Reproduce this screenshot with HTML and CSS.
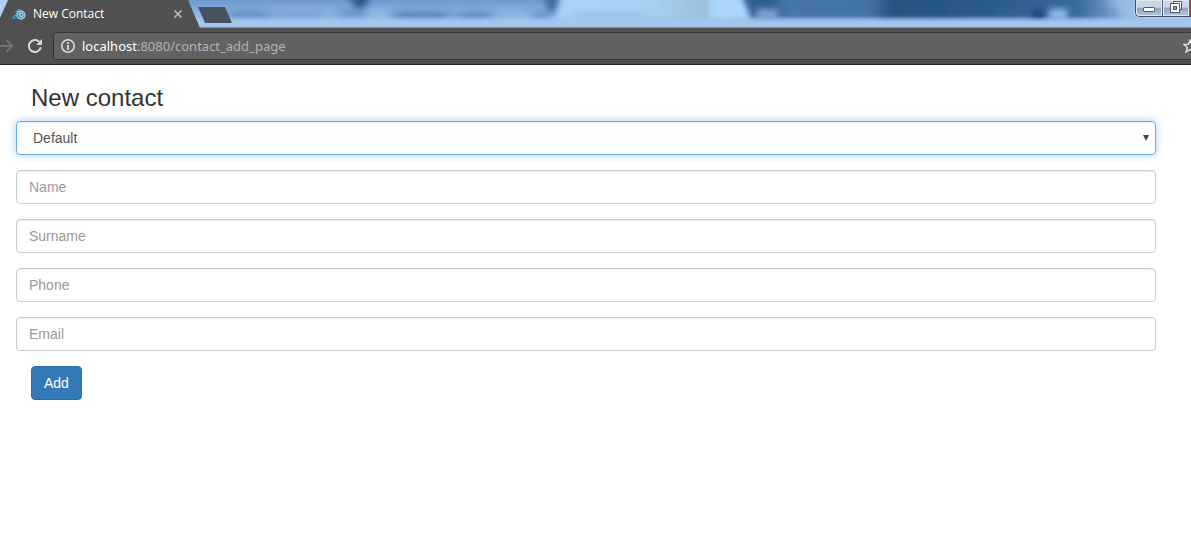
FILE: index.html
```html
<!DOCTYPE html>
<html lang="en">
<head>
<meta charset="utf-8">
<title>New Contact</title>
<link rel="stylesheet" href="styles.css">
</head>
<body>
<header class="browser">
  <div class="tabstrip">
    <svg class="glass" viewBox="0 0 1191 28" preserveAspectRatio="none" aria-hidden="true">
      <defs>
        <linearGradient id="sky" x1="0" y1="0" x2="0" y2="1">
          <stop offset="0" stop-color="#6d98c9"/>
          <stop offset="0.4" stop-color="#86b2e3"/>
          <stop offset="1" stop-color="#a2c5ec"/>
        </linearGradient>
        <linearGradient id="pale" x1="0" y1="0" x2="1" y2="0">
          <stop offset="0" stop-color="#a9d4fa"/>
          <stop offset="0.4" stop-color="#a9d3f6"/>
          <stop offset="0.76" stop-color="#9cbfdc"/>
          <stop offset="0.8" stop-color="#aed9fc"/>
          <stop offset="1" stop-color="#a9d6fb"/>
        </linearGradient>
        <linearGradient id="deep" x1="0" y1="0" x2="1" y2="0">
          <stop offset="0" stop-color="#2c5e8f"/>
          <stop offset="0.08" stop-color="#2f6091"/>
          <stop offset="0.11" stop-color="#4676a9"/>
          <stop offset="0.32" stop-color="#4573a6"/>
          <stop offset="0.38" stop-color="#25527f"/>
          <stop offset="0.62" stop-color="#2b5b8a"/>
          <stop offset="0.85" stop-color="#39699b"/>
          <stop offset="1" stop-color="#91b8e5"/>
        </linearGradient>
        <linearGradient id="edge" x1="0" y1="0" x2="0" y2="1">
          <stop offset="0" stop-color="#a6c7ee" stop-opacity="0"/>
          <stop offset="1" stop-color="#a6c7ee"/>
        </linearGradient>
        <filter id="soft" filterUnits="userSpaceOnUse" x="-20" y="-30" width="1240" height="90"><feGaussianBlur stdDeviation="7 3"/></filter>
        <filter id="slight" filterUnits="userSpaceOnUse" x="-20" y="-30" width="1240" height="90"><feGaussianBlur stdDeviation="3"/></filter>
      </defs>
      <rect width="1191" height="28" fill="url(#sky)"/>
      <rect x="-10" y="-5" width="40" height="34" fill="#b5cdf0" filter="url(#slight)"/>
      <g filter="url(#soft)">
        <rect x="226" y="10" width="42" height="9" fill="#6590c2"/>
        <rect x="272" y="11" width="52" height="7" fill="#789fd0"/>
        <rect x="340" y="8" width="26" height="10" fill="#6993c5"/>
        <rect x="393" y="11" width="56" height="8" fill="#5682b7"/>
        <rect x="458" y="11" width="34" height="8" fill="#6088ba"/>
        <rect x="534" y="10" width="14" height="9" fill="#5c89be"/>
        <rect x="372" y="10" width="10" height="9" fill="#8dc7e0"/>
      </g>
      <path d="M346-8h26l-8 16h-8z" fill="#29588b" filter="url(#slight)"/>
      <path d="M542-8h20l-6 20h-8z" fill="#416f9f" filter="url(#slight)"/>
      <path d="M562-8H740l14 28H556z" fill="url(#pale)" filter="url(#slight)"/>
      <rect x="572" y="12" width="70" height="6" fill="#98bfe9" filter="url(#soft)"/>
      <path d="M742-8H1136L1120 20H752z" fill="url(#deep)" filter="url(#slight)"/>
      <rect x="756" y="9" width="22" height="12" fill="#7ea3d0" filter="url(#slight)"/>
      <rect x="1032" y="10" width="12" height="9" fill="#204185" filter="url(#slight)"/>
      <rect x="1049" y="9" width="18" height="11" fill="#8bc0ee" filter="url(#slight)"/>
      <path d="M1107-4h90v26h-68z" fill="#9abde6" filter="url(#soft)"/>
      <rect y="16" width="1191" height="7" fill="url(#edge)"/>
      <rect y="23" width="1191" height="4" fill="#a6c5eb"/>
      <rect y="27" width="1191" height="1" fill="#7491b4"/>
    </svg>
    <div class="tab">
      <svg class="tab-icon" viewBox="0 0 14 14" aria-hidden="true">
        <path d="M1 10.500 7.500 4.500H3.500M5.500 2.500 8 3.200 12 5" fill="none" stroke="#4aa3dc" stroke-width="1.300"/>
        <ellipse cx="9" cy="8" rx="4" ry="3.700" fill="#5d88a8" stroke="#91c8e9" stroke-width="1.400"/>
        <circle cx="9.300" cy="7.800" r="1.700" fill="#3178b0" stroke="#e2eff5"/>
        <path d="M0 11h5" stroke="#2e8fd0" stroke-width="1.500"/>
      </svg>
      <span class="tab-title">New Contact</span>
      <button class="tab-close" type="button" aria-label="Close tab">
        <svg viewBox="0 0 10 10"><path d="M1.500 1.500l7 7M8.500 1.500l-7 7" stroke="#bcbcbc" stroke-width="1.700"/></svg>
      </button>
    </div>
    <button class="new-tab" type="button" aria-label="New tab"></button>
    <div class="window-controls">
      <button type="button" aria-label="Minimize">
        <svg viewBox="0 0 14 12"><rect x="1.500" y="6.500" width="11" height="4" rx="1" fill="#fff" stroke="#4b5565"/></svg>
      </button>
      <button type="button" aria-label="Restore">
        <svg viewBox="0 0 14 12"><path d="M4.500.5h8v8h-2v3h-9v-9h3z" fill="#fff" stroke="#4b5565"/><path d="M4 2.500h6.500V9" fill="none" stroke="#4b5565"/><rect x="4.500" y="5.500" width="3" height="3" fill="#8fa0b8" stroke="#4b5565"/></svg>
      </button>
      <button class="window-close" type="button" aria-label="Close"></button>
    </div>
  </div>
  <div class="toolbar">
    <button class="nav forward" type="button" aria-label="Forward">
      <svg viewBox="0 0 14 14"><path d="M0 7h12M6.500 1l6 6-6 6" fill="none" stroke="#737373" stroke-width="1.800"/></svg>
    </button>
    <button class="nav" type="button" aria-label="Reload">
      <svg viewBox="0 0 14 14"><path d="M12.800 8.300A6 6 0 1 1 11.200 2.800" fill="none" stroke="#dadada" stroke-width="2"/><path d="M14 0v6H8z" fill="#dadada"/></svg>
    </button>
    <div class="address">
      <svg class="info" viewBox="0 0 14 14" aria-hidden="true"><circle cx="7" cy="7" r="6.200" fill="none" stroke="#dedede" stroke-width="1.500"/><path d="M7 6v5M7 3v2" stroke="#dedede" stroke-width="1.800"/></svg>
      <span class="url"><span class="host">localhost</span>:8080/contact_add_page</span>
      <svg class="star" viewBox="0 0 14 14" aria-hidden="true"><path d="M7 1l1.700 4.200 4.500.3-3.500 2.900 1.200 4.500L7 10.400l-3.900 2.500 1.200-4.500L.8 5.500l4.500-.3z" fill="none" stroke="#dcdcdc" stroke-width="1.500"/></svg>
    </div>
  </div>
</header>
<main class="page">
  <h1 class="title">New contact</h1>
  <form class="form">
    <select class="field group" aria-label="Group"><option>Default</option></select>
    <input class="field" type="text" placeholder="Name" aria-label="Name">
    <input class="field" type="text" placeholder="Surname" aria-label="Surname">
    <input class="field" type="tel" placeholder="Phone" aria-label="Phone">
    <input class="field" type="email" placeholder="Email" aria-label="Email">
    <button class="submit" type="button">Add</button>
  </form>
</main>
</body>
</html>
```

FILE: styles.css
```css
* { box-sizing: border-box; }

body {
  margin: 0;
  background: #fff;
  color: #333;
  font: 14px/20px "Liberation Sans", Arial, sans-serif;
}

button { padding: 0; border: 0; background: none; font: inherit; }
svg { display: block; }

.browser {
  overflow: hidden;
  font-family: "Open Sans", "Noto Sans", sans-serif;
}

.tabstrip {
  position: relative;
  display: flex;
  align-items: flex-start;
  height: 28px;
}

.glass {
  position: absolute;
  inset: 0;
  width: 100%;
  height: 100%;
}

.tab {
  position: relative;
  display: flex;
  align-items: center;
  width: 201px;
  height: 28px;
  padding: 0 18px 0 12px;
  background: #505050;
  clip-path: polygon(8px 0, 188px 0, 200px 28px, 0 28px, 0 18px);
}

.tab-icon { width: 14px; height: 14px; margin-right: 7px; }
.tab-title { flex: 1; color: #fff; font-size: 12px; line-height: 28px; }
.tab-close svg { width: 10px; height: 10px; }

.new-tab {
  position: relative;
  width: 34px;
  height: 16px;
  margin: 7px 0 0 -3px;
  background: #465260;
  clip-path: polygon(0 0, 27px 0, 34px 16px, 7px 16px);
}

.window-controls {
  position: relative;
  display: flex;
  height: 17px;
  margin-left: auto;
  border: 1px solid #3c4d65;
  border-width: 0 0 1px 1px;
  border-radius: 0 0 0 5px;
  box-shadow: 0 0 2px #e5effa;
}

.window-controls button {
  display: grid;
  place-items: start center;
  width: 27px;
  padding-top: 1px;
  border-right: 1px solid #53667f;
  background: linear-gradient(#ccd6e3 45%, #8fa3bf 50%, #b5c5da);
  box-shadow: inset 0 0 0 1px #dce7f3;
}

.window-controls button:first-child { border-radius: 0 0 0 4px; }
.window-controls svg { width: 14px; height: 12px; }
.window-controls .window-close { width: 1px; border: 0; background: #a73130; box-shadow: none; }

.toolbar {
  display: flex;
  align-items: center;
  height: 37px;
  border-bottom: 1px solid #282828;
  background: #505050;
}

.nav { width: 14px; height: 14px; margin-right: 14px; }
.nav svg { width: 14px; height: 14px; }
.nav + .nav { margin-right: 11px; }

.address {
  display: flex;
  flex: 1;
  align-items: center;
  height: 28px;
  margin-right: -7px;
  padding-left: 7px;
  border: 1px solid #383838;
  border-radius: 3px;
  background: #626262;
}

.info { width: 14px; height: 14px; margin-right: 7px; }
.url { flex: 1; color: #b3b3b3; font-family: "Noto Sans", "Open Sans", sans-serif; font-size: 13px; }
.host { color: #fff; }
.star { width: 14px; height: 14px; }

.page { padding: 20px 35px 20px 16px; }

.title {
  margin: 0 0 10px 15px;
  font-size: 24px;
  font-weight: 400;
  line-height: 26px;
}

.form { display: flex; flex-direction: column; gap: 15px; }

.field {
  width: 100%;
  height: 34px;
  padding: 6px 12px;
  border: 1px solid #ccc;
  border-radius: 4px;
  background: #fff;
  box-shadow: inset 0 1px 1px rgba(0, 0, 0, .075);
  color: #555;
  font: inherit;
  outline: 0;
}

.field::placeholder { color: #999; opacity: 1; }

.group {
  appearance: none;
  padding: 6px 16px;
  border-color: #66afe9;
  background: #fff url("data:image/svg+xml,%3Csvg xmlns='http://www.w3.org/2000/svg' viewBox='0 0 6 6'%3E%3Cpath d='M0 0h6L3 6z' fill='%23444'/%3E%3C/svg%3E") no-repeat right 6px center / 6px 6px;
  box-shadow: inset 0 1px 1px rgba(0, 0, 0, .075), 0 0 8px rgba(102, 175, 233, .6);
}

.submit {
  align-self: flex-start;
  height: 34px;
  margin-left: 15px;
  padding: 6px 12px;
  border: 1px solid #2e6da4;
  border-radius: 4px;
  background: #337ab7;
  color: #fff;
}
```
